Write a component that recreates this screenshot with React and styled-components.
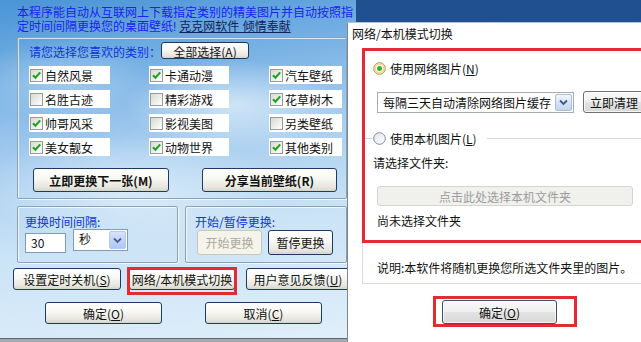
import styled, { createGlobalStyle } from 'styled-components';

const GlobalStyle = createGlobalStyle`
  html, body { margin: 0; padding: 0; }
  body {
    font-family: "Noto Sans CJK SC", "Liberation Sans", sans-serif;
    font-size: 12px;
  }
  * { box-sizing: border-box; }
`;

const categories = [
  { name: '自然风景', on: true },
  { name: '卡通动漫', on: true },
  { name: '汽车壁纸', on: true },
  { name: '名胜古迹', on: false },
  { name: '精彩游戏', on: false },
  { name: '花草树木', on: true },
  { name: '帅哥风采', on: true },
  { name: '影视美图', on: false },
  { name: '另类壁纸', on: false },
  { name: '美女靓女', on: true },
  { name: '动物世界', on: true },
  { name: '其他类别', on: true },
];
const colWidths = [81, 80, 73];

const Desktop = styled.div`
  position: relative;
  width: 641px;
  height: 342px;
  overflow: hidden;
  background: linear-gradient(180deg, #1f4f8e, #2a62a6);
`;

// 主窗口，天空背景
const MainWindow = styled.div`
  width: 356px;
  height: 342px;
  display: flex;
  flex-direction: column;
  background:
    radial-gradient(ellipse 110px 45px at 235px 105px, rgba(255, 255, 255, 0.55), transparent),
    radial-gradient(ellipse 150px 55px at 130px 190px, rgba(255, 255, 255, 0.45), transparent),
    radial-gradient(ellipse 90px 40px at 60px 80px, rgba(255, 255, 255, 0.3), transparent),
    linear-gradient(172deg, #4a94d6 0%, #74afe3 20%, #a6cdef 42%, #cbe3f6 66%, #e0effa 100%);
`;

const Intro = styled.div`
  padding: 6px 0 0 17px;
  font-family: "Liberation Sans", "Noto Sans CJK SC", sans-serif;
  color: #1c22f2;
  line-height: 14px;
  white-space: nowrap;
`;

const IntroLine = styled.div`
  height: 14px;
`;

const Credit = styled.span`
  color: #14215c;
  text-decoration: underline;
  margin-left: 3px;
`;

const GroupBox = styled.div`
  border: 1px solid #8aa1b8;
  border-radius: 2px;
  box-shadow: inset 1px 1px 0 rgba(255, 255, 255, 0.7), 1px 1px 0 rgba(255, 255, 255, 0.7);
`;

const CategoryGroup = styled(GroupBox)`
  margin: 3px 0 0 17px;
  width: 330px;
  height: 162px;
  padding: 4px 0 0 11px;
`;

const GroupLabel = styled.div`
  color: #1036d8;
  line-height: 14px;
  height: 14px;
  white-space: nowrap;
  margin-left: ${(p) => p.$shift || 0}px;
`;

const HeaderRow = styled.div`
  display: flex;
  align-items: center;
  height: 17px;
  ${GroupLabel} {
    width: 132px;
    margin-top: 3px;
  }
`;

const XpButton = styled.button`
  width: ${(p) => p.$w}px;
  height: ${(p) => p.$h || 22}px;
  padding: 0;
  flex: none;
  font-family: inherit;
  font-size: 12px;
  font-weight: ${(p) => (p.$bold ? 700 : 400)};
  color: #111;
  border: 1px solid #1d3b60;
  border-radius: 3px;
  background: linear-gradient(180deg, #ffffff 0%, #f7f7f3 45%, #e6e5dd 85%, #d6d4c8 100%);
  white-space: nowrap;
  &:disabled {
    color: #aca899;
    border-color: #c9c7ba;
    background: #f5f4ec;
  }
`;

const CheckGrid = styled.div`
  margin-top: 7px;
  display: grid;
  grid-template-columns: repeat(3, 120px);
  row-gap: 6px;
`;

const CheckItem = styled.label`
  display: flex;
  align-items: center;
  gap: 2px;
  width: ${(p) => p.$w}px;
  height: 18px;
  padding-left: 1px;
  background: #fff;
  color: #111;
  white-space: nowrap;
`;

const Box = styled.span`
  width: 13px;
  height: 13px;
  flex: none;
  display: flex;
  align-items: center;
  justify-content: center;
  border: 1px solid #8e9cab;
  background: linear-gradient(135deg, #d9d9d3, #f4f4f0 70%, #ffffff);
`;

const ActionRow = styled.div`
  display: flex;
  gap: 33px;
  margin: 12px 0 0 4px;
`;

const LowerRow = styled.div`
  display: flex;
  gap: 7px;
  margin: 7px 0 0 17px;
`;

const SmallGroup = styled(GroupBox)`
  width: ${(p) => p.$w}px;
  height: 57px;
  padding: 8px 0 0 ${(p) => p.$pad}px;
`;

const ControlRow = styled.div`
  display: flex;
  align-items: flex-start;
  gap: ${(p) => p.$gap}px;
  margin-top: ${(p) => p.$top || 0}px;
`;

const NumInput = styled.div`
  width: 41px;
  height: 20px;
  margin-top: 4px;
  border: 1px solid #7f9db9;
  background: #fff;
  padding: 2px 0 0 5px;
  line-height: 14px;
  color: #111;
`;

const Combo = styled.div`
  width: ${(p) => p.$w}px;
  height: ${(p) => p.$h}px;
  display: flex;
  align-items: stretch;
  border: 1px solid ${(p) => (p.$win7 ? '#a5acb5' : '#7f9db9')};
  background: #fff;
  padding: 1px;
  color: #111;
`;

const ComboText = styled.div`
  flex: 1;
  padding-left: ${(p) => p.$pad}px;
  line-height: ${(p) => p.$lh}px;
  white-space: nowrap;
`;

const ComboArrow = styled.div`
  width: 17px;
  display: flex;
  align-items: center;
  justify-content: center;
  border: 1px solid ${(p) => (p.$win7 ? '#a9bdd6' : '#b4c8f4')};
  border-radius: 2px;
  background: ${(p) =>
    p.$win7
      ? 'linear-gradient(180deg, #f1f6fc, #d4e3f5 55%, #c3d6ef)'
      : 'linear-gradient(180deg, #d7e3fc, #c1d3fb 50%, #b0c6f6)'};
`;

const ButtonsRow = styled.div`
  display: flex;
  gap: ${(p) => p.$gap}px;
  margin: ${(p) => p.$top}px 0 0 ${(p) => p.$left}px;
`;

// 红色标注框
const Marked = styled.div`
  position: relative;
  &::after {
    content: '';
    position: absolute;
    top: ${(p) => p.$t}px;
    left: ${(p) => p.$l}px;
    right: ${(p) => p.$r}px;
    bottom: ${(p) => p.$b}px;
    border: 3px solid #e32b31;
    pointer-events: none;
  }
`;

const BottomStrip = styled.div`
  margin-top: auto;
  height: 4px;
  background: #a4a9ae;
  border-top: 1px solid #5f666d;
`;

// 对话框
const Dialog = styled.div`
  position: absolute;
  left: 347px;
  top: 22px;
  width: 315px;
  bottom: 0;
  background: #fff;
  border-left: 1px solid #7d858d;
  border-top: 1px solid #b4c2d2;
  display: flex;
  flex-direction: column;
`;

const DialogTitle = styled.div`
  height: 25px;
  padding: 4px 0 0 4px;
  line-height: 14px;
  color: #111;
`;

const Panel = styled.div`
  margin-left: 14px;
  width: 286px;
  height: 236px;
  border: 1px solid #d5dbe1;
  border-top: none;
`;

const RedFrame = styled.div`
  margin: 0 -1px;
  height: 195px;
  border: 3px solid #e32b31;
  display: flex;
  flex-direction: column;
`;

const Line = styled.div`
  line-height: 14px;
  height: 14px;
  color: #111;
  white-space: nowrap;
  margin-top: ${(p) => p.$top || 0}px;
  padding-left: ${(p) => p.$left || 0}px;
`;

const RadioRow = styled.div`
  display: flex;
  align-items: center;
  gap: 4px;
  height: 14px;
  margin-top: ${(p) => p.$top}px;
  padding-left: ${(p) => p.$left || 0}px;
  color: #111;
  white-space: nowrap;
`;

const Rule = styled.div`
  height: 1px;
  background: #d5dbe1;
  width: ${(p) => (p.$w ? `${p.$w}px` : 'auto')};
  flex: ${(p) => (p.$w ? 'none' : 1)};
  margin-left: ${(p) => p.$ml || 0}px;
  margin-right: ${(p) => (p.$w ? -4 : 0)}px;
`;

const Win7Button = styled.button`
  width: ${(p) => p.$w}px;
  height: ${(p) => p.$h}px;
  padding: 0;
  flex: none;
  font-family: inherit;
  font-size: 12px;
  color: #111;
  border: 1px solid ${(p) => (p.$default ? '#3b4d6a' : '#707070')};
  border-radius: 3px;
  background: linear-gradient(180deg, #f8f8f8 0%, #f0f0f0 48%, #e3e3e3 52%, #d8d8d8 100%);
  box-shadow: inset 0 0 0 1px rgba(255, 255, 255, 0.7);
  white-space: nowrap;
  &:disabled {
    color: #9c9c9c;
    border-color: #d3d3d0;
    background: #f0f0ec;
    box-shadow: none;
  }
`;

const SelectRow = styled.div`
  display: flex;
  align-items: center;
  gap: 9px;
  margin-top: 16px;
  padding-left: 12px;
`;

const Note = styled.div`
  margin-top: 18px;
  padding-left: 14px;
  line-height: 14px;
  color: #111;
  white-space: nowrap;
`;

const Check = () => (
  <svg width="11" height="11" viewBox="0 0 11 11">
    <path d="M2 5.2 L4.4 7.8 L9.2 2.4" fill="none" stroke="#21a121" strokeWidth="2.1" />
  </svg>
);

const Chevron = ({ color }) => (
  <svg width="9" height="7" viewBox="0 0 9 7">
    <path d="M1 1.5 L4.5 5 L8 1.5" fill="none" stroke={color} strokeWidth="1.8" />
  </svg>
);

const Radio = ({ checked }) =>
  checked ? (
    <svg width="13" height="13" viewBox="0 0 13 13">
      <circle cx="6.5" cy="6.5" r="5.8" fill="#f3ecd2" stroke="#b49547" strokeWidth="1" />
      <circle cx="6.5" cy="6.5" r="4.2" fill="#fffbee" stroke="#eccd7a" strokeWidth="0.9" />
      <circle cx="6.5" cy="6.5" r="2.5" fill="#34b02f" />
    </svg>
  ) : (
    <svg width="13" height="13" viewBox="0 0 13 13">
      <defs>
        <linearGradient id="rfill" x1="0" y1="0" x2="1" y2="1">
          <stop offset="0" stopColor="#dfe4ea" />
          <stop offset="1" stopColor="#ffffff" />
        </linearGradient>
      </defs>
      <circle cx="6.5" cy="6.5" r="5.8" fill="url(#rfill)" stroke="#7e8ea2" strokeWidth="1" />
    </svg>
  );

const Key = ({ k }) => (
  <>
    (<u>{k}</u>)
  </>
);

export default function App() {
  return (
    <>
      <GlobalStyle />
      <Desktop>
        <MainWindow>
          <Intro>
            <IntroLine>本程序能自动从互联网上下载指定类别的精美图片并自动按照指</IntroLine>
            <IntroLine>
              定时间间隔更换您的桌面壁纸!<Credit>克克网软件 倾情奉献</Credit>
            </IntroLine>
          </Intro>

          <CategoryGroup>
            <HeaderRow>
              <GroupLabel>请您选择您喜欢的类别：</GroupLabel>
              <XpButton $w={88} $h={17}>
                全部选择<Key k="A" />
              </XpButton>
            </HeaderRow>
            <CheckGrid>
              {categories.map((c, i) => (
                <CheckItem key={c.name} $w={colWidths[i % 3]}>
                  <Box>{c.on && <Check />}</Box>
                  {c.name}
                </CheckItem>
              ))}
            </CheckGrid>
            <ActionRow>
              <XpButton $w={136} $h={24} $bold>
                立即更换下一张(M)
              </XpButton>
              <XpButton $w={135} $h={24} $bold>
                分享当前壁纸(R)
              </XpButton>
            </ActionRow>
          </CategoryGroup>

          <LowerRow>
            <SmallGroup $w={161} $pad={7}>
              <GroupLabel>更换时间间隔:</GroupLabel>
              <ControlRow $gap={7}>
                <NumInput>30</NumInput>
                <Combo $w={55} $h={22}>
                  <ComboText $pad={4} $lh={16}>秒</ComboText>
                  <ComboArrow>
                    <Chevron color="#4d6185" />
                  </ComboArrow>
                </Combo>
              </ControlRow>
            </SmallGroup>
            <SmallGroup $w={162} $pad={11}>
              <GroupLabel $shift={-2}>开始/暂停更换:</GroupLabel>
              <ControlRow $gap={6} $top={1}>
                <XpButton $w={65} $h={25} disabled>
                  开始更换
                </XpButton>
                <XpButton $w={65} $h={25}>
                  暂停更换
                </XpButton>
              </ControlRow>
            </SmallGroup>
          </LowerRow>

          <ButtonsRow $gap={8} $top={5} $left={13}>
            <XpButton $w={108}>
              设置定时关机<Key k="S" />
            </XpButton>
            <Marked $t={-1} $l={-2} $r={-2} $b={-5}>
              <XpButton $w={106}>网络/本机模式切换</XpButton>
            </Marked>
            <XpButton $w={104} style={{ marginLeft: 3 }}>
              用户意见反馈<Key k="U" />
            </XpButton>
          </ButtonsRow>

          <ButtonsRow $gap={43} $top={12} $left={45}>
            <XpButton $w={117}>
              确定<Key k="O" />
            </XpButton>
            <XpButton $w={117}>
              取消<Key k="C" />
            </XpButton>
          </ButtonsRow>

          <BottomStrip />
        </MainWindow>

        <Dialog>
          <DialogTitle>网络/本机模式切换</DialogTitle>
          <Panel>
            <RedFrame>
              <RadioRow $top={10} $left={8}>
                <Radio checked />
                <span>
                  使用网络图片<Key k="N" />
                </span>
              </RadioRow>
              <SelectRow>
                <Combo $w={203} $h={21} $win7>
                  <ComboText $pad={4} $lh={17}>每隔三天自动清除网络图片缓存</ComboText>
                  <ComboArrow $win7>
                    <Chevron color="#3e5b87" />
                  </ComboArrow>
                </Combo>
                <Win7Button $w={62} $h={22}>
                  立即清理
                </Win7Button>
              </SelectRow>
              <RadioRow $top={18}>
                <Rule $w={8} />
                <Radio />
                <span>
                  使用本机图片<Key k="L" />
                </span>
                <Rule $ml={6} />
              </RadioRow>
              <Line $top={11} $left={8}>
                请选择文件夹:
              </Line>
              <SelectRow>
                <Win7Button $w={256} $h={20} disabled>
                  点击此处选择本机文件夹
                </Win7Button>
              </SelectRow>
              <Line $top={8} $left={12}>
                尚未选择文件夹
              </Line>
            </RedFrame>
            <Note>说明:本软件将随机更换您所选文件夹里的图片。</Note>
          </Panel>
          <ButtonsRow $gap={0} $top={16} $left={94}>
            <Marked $t={-4} $l={-9} $r={-20} $b={-3}>
              <Win7Button $w={115} $h={24} $default>
                确定<Key k="O" />
              </Win7Button>
            </Marked>
          </ButtonsRow>
        </Dialog>
      </Desktop>
    </>
  );
}
